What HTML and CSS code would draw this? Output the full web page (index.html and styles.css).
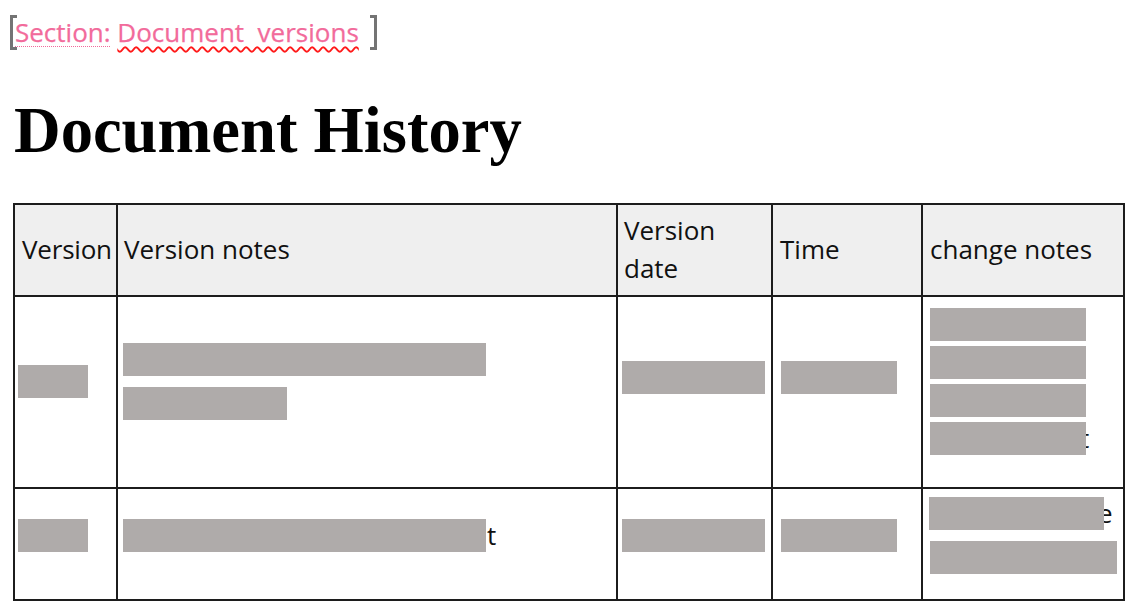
FILE: index.html
```html
<!DOCTYPE html>
<html lang="en">
<head>
<meta charset="utf-8">
<title>Document History</title>
<link rel="stylesheet" href="styles.css">
</head>
<body>
<div class="page">
  <div class="section-line">
    <span class="bracket bracket-open"></span>
    <span class="section-text"><span class="dotted">Section:</span> <span class="wavy">Document&nbsp; versions</span></span>
    <span class="bracket bracket-close"></span>
  </div>

  <h1 class="title">Document History</h1>

  <table class="history">
    <colgroup>
      <col class="col-ver">
      <col class="col-notes">
      <col class="col-date">
      <col class="col-time">
      <col class="col-change">
    </colgroup>
    <thead>
      <tr class="head-row">
        <th class="c-ver">Version</th>
        <th>Version notes</th>
        <th>Version date</th>
        <th class="c-time">Time</th>
        <th class="c-change">change notes</th>
      </tr>
    </thead>
    <tbody>
      <tr class="row-1">
        <td class="c-ver"><div class="ln"><span class="redact w70"></span></div></td>
        <td class="c-notes">
          <div class="ln"><span class="redact w363"></span></div>
          <div class="ln gap"><span class="redact w164"></span></div>
        </td>
        <td class="c-date"><div class="ln up"><span class="redact w143"></span></div></td>
        <td class="c-time"><div class="ln up"><span class="redact w116"></span></div></td>
        <td class="c-change">
          <div class="ln"><span class="redact w156"></span></div>
          <div class="ln"><span class="redact w156"></span></div>
          <div class="ln"><span class="redact w156"></span></div>
          <div class="ln"><span class="redact w156"></span><span class="tail">t</span></div>
        </td>
      </tr>
      <tr class="row-2">
        <td class="c-ver"><div class="ln"><span class="redact w70"></span></div></td>
        <td class="c-notes"><div class="ln"><span class="redact w363"></span><span class="tail-full">t</span></div></td>
        <td class="c-date"><div class="ln"><span class="redact w143"></span></div></td>
        <td class="c-time"><div class="ln"><span class="redact w116"></span></div></td>
        <td class="c-change">
          <div class="ln"><span class="redact w175 shift-left"></span><span class="tail">e</span></div>
          <div class="ln gap"><span class="redact w187"></span></div>
        </td>
      </tr>
    </tbody>
  </table>
</div>
</body>
</html>
```

FILE: styles.css
```css
* {
  box-sizing: border-box;
}

html, body {
  margin: 0;
  padding: 0;
  background: #ffffff;
}

.page {
  padding: 14px 16px 0 10px;
  font-family: "Open Sans", "Liberation Sans", sans-serif;
  color: #111111;
}

/* Section content-control line */
.section-line {
  display: flex;
  align-items: flex-start;
  height: 36px;
}

.bracket {
  display: block;
  width: 7px;
  height: 35px;
  margin-top: 1px;
  border: 3px solid #747474;
}

.bracket-open {
  border-right: none;
  margin-right: -2px;
}

.bracket-close {
  border-left: none;
  margin-left: 11px;
}

.section-text {
  font-size: 26px;
  line-height: 36px;
  color: #f26b9b;
  white-space: nowrap;
  -webkit-text-stroke: 0.25px #f26b9b;
}

.dotted {
  text-decoration: underline dotted #f26b9b;
  text-decoration-thickness: 1px;
  text-underline-offset: 4px;
}

.wavy {
  text-decoration: underline wavy #ff1a1a;
  text-decoration-thickness: 1.5px;
  text-underline-offset: 4px;
  text-decoration-skip-ink: none;
}

/* Heading */
.title {
  margin: 48px 0 0 4px;
  font-family: "Liberation Serif", "Times New Roman", serif;
  font-weight: bold;
  font-size: 64.6px;
  line-height: 64px;
  color: #000000;
}

/* Table */
.history {
  margin: 41px 0 0 3px;
  width: 1110px;
  table-layout: fixed;
  border-collapse: collapse;
  font-size: 26px;
  color: #111111;
}

.col-ver { width: 103px; }
.col-notes { width: 500px; }
.col-date { width: 155px; }
.col-time { width: 150px; }
.col-change { width: 202px; }

.history th,
.history td {
  border: 2px solid #1c1c1c;
  vertical-align: middle;
  text-align: left;
  padding: 0 6px;
}

.history th {
  background: #efefef;
  font-weight: normal;
  line-height: 38px;
  height: 92px;
  padding-bottom: 3px;
}

.history th.c-ver {
  padding: 0 0 3px 7px;
  letter-spacing: -0.2px;
}

.history th.c-time,
.history th.c-change {
  padding-left: 7px;
}

.history td {
  padding: 8px 6px 30px;
}

.row-1 td { height: 192px; }
.row-2 td { height: 112px; }

.history .row-2 td {
  padding-top: 4px;
  padding-bottom: 22px;
}

.history td.c-ver { padding-left: 3px; }
.history td.c-time { padding-left: 8px; }
.history td.c-change { padding-left: 7px; }
.history td.c-notes { padding-left: 5px; }
.history td.c-date { padding-left: 4px; }

.ln {
  display: flex;
  align-items: center;
  height: 38px;
  white-space: nowrap;
}

.ln.gap {
  margin-top: 6px;
}

.ln.up {
  margin-top: -8px;
}

.redact {
  position: relative;
  z-index: 1;
  display: inline-block;
  height: 33px;
  background: #afabaa;
  flex: none;
}

.w70 { width: 70px; }
.w116 { width: 116px; }
.w143 { width: 143px; }
.w156 { width: 156px; }
.w164 { width: 164px; }
.w175 { width: 175px; }
.w187 { width: 187px; }
.w363 { width: 363px; }

.shift-left { margin-left: -1px; }

.tail {
  margin-left: -6px;
  line-height: 38px;
}

.tail-full {
  margin-left: 1px;
  line-height: 38px;
}
```
